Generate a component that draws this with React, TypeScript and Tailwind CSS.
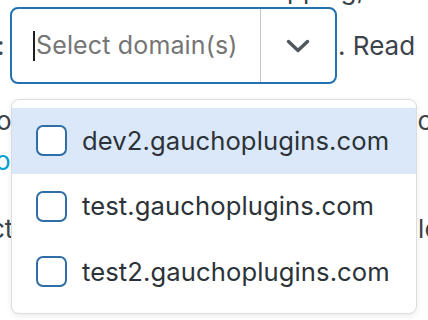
import React from "react";

const items = ["dev2.gauchoplugins.com", "test.gauchoplugins.com", "test2.gauchoplugins.com"];

export default function App() {
  return (
    <div
      className="relative w-[428px] h-[320px] overflow-hidden bg-white text-[#3c434a]"
      style={{ fontFamily: "Inter, 'Noto Sans', sans-serif" }}
    >
      {/* top line, mostly cut off */}
      <div className="h-[7px] relative overflow-hidden">
        <div className="absolute left-[287px] top-[-25px] text-[26px] leading-[30px] whitespace-nowrap">pping,</div>
      </div>

      {/* select row */}
      <div className="flex items-center h-[77px] -ml-[3px]">
        <span className="text-[26px] leading-none w-[13px]">:</span>
        <div className="flex h-[77px] w-[327px] rounded-[8px] border-2 border-[#2271b1] bg-white">
          <div className="flex flex-1 items-center pl-[21px]">
            <span className="w-[2px] h-[30px] bg-[#1e1e1e]"></span>
            <span className="ml-[1px] text-[25px] text-[#757575] tracking-[0.15px]">Select domain(s)</span>
          </div>
          <div className="w-px bg-[#c3c4c7]"></div>
          <div className="flex w-[74px] items-center justify-center">
            <svg width="26" height="16" viewBox="0 0 26 16" fill="none">
              <path d="M3.5 3.5L13 12.5L22.5 3.5" stroke="#50575e" strokeWidth="3.4" strokeLinecap="round" strokeLinejoin="round" />
            </svg>
          </div>
        </div>
        <span className="text-[26px] ml-[1px] whitespace-nowrap">. Read</span>
      </div>

      {/* background text lines hidden behind menu */}
      <div className="flex justify-between text-[26px] leading-[30px] mt-[22px] -ml-[4px] -mr-[20px] whitespace-nowrap">
        <span>o</span>
        <span>co</span>
      </div>
      <div className="text-[26px] leading-[30px] mt-[10px] -ml-[5px] text-[#00a0d2]">o</div>
      <div className="flex justify-between text-[26px] leading-[30px] mt-[38px] -ml-[10px] -mr-[12px] whitespace-nowrap">
        <span>ct</span>
        <span>lo</span>
      </div>

      {/* dropdown menu */}
      <div className="absolute left-[11px] top-[99px] w-[406px] h-[215px] rounded-[8px] border border-[#dcdcde] bg-white shadow-[0_2px_6px_rgba(0,0,0,0.08)] pt-[8px] overflow-hidden">
        {items.map((it, i) => (
          <div
            key={it}
            className={`flex items-center h-[65.5px] pl-[24px] gap-[15px] ${i === 0 ? "bg-[#dbe8fa]" : ""}`}
          >
            <span className="w-[31px] h-[31px] rounded-[7px] border-2 border-[#2f6ea7] bg-white shrink-0"></span>
            <span className="text-[25.6px] text-[#2c3338] tracking-[0.1px]">{it}</span>
          </div>
        ))}
      </div>
    </div>
  );
}
